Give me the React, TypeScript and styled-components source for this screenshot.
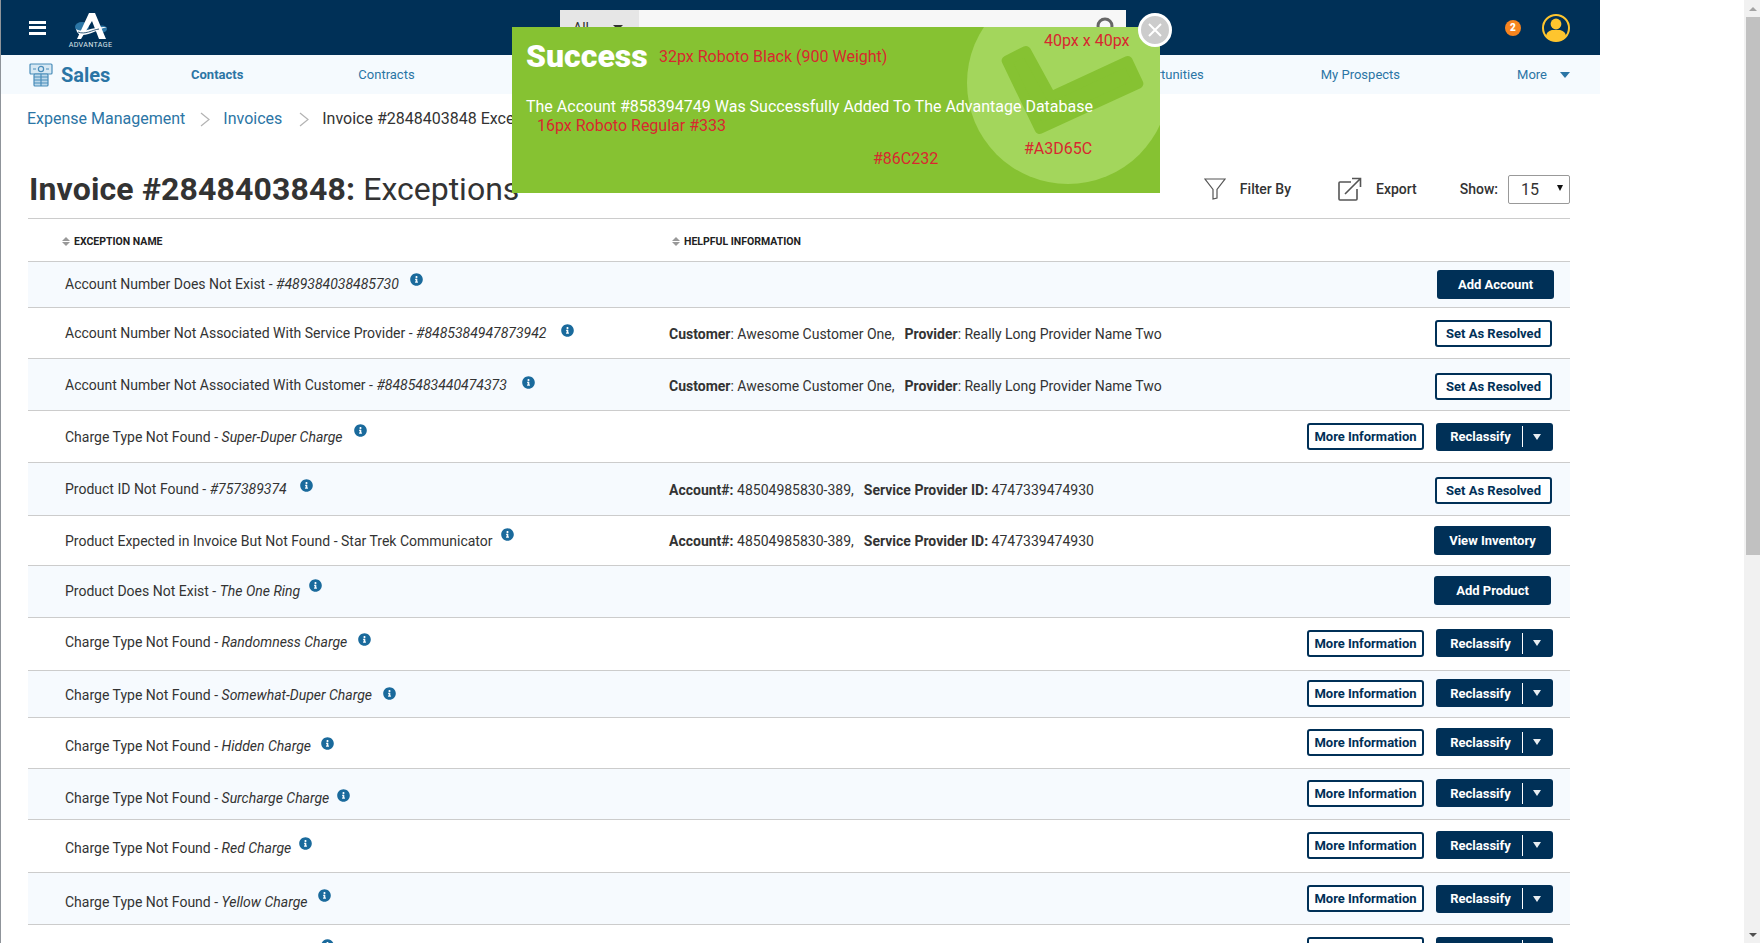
import styled, { createGlobalStyle } from "styled-components";
import { FaInfoCircle } from "react-icons/fa";

const GlobalStyle = createGlobalStyle`
  html, body {
    margin: 0;
    height: 100%;
    overflow: hidden;
    background: #fff;
    font-family: Roboto, "Liberation Sans", sans-serif;
    color: #333;
  }
  * { box-sizing: border-box; }
`;

// moves a centred cell down (or up) by n px inside its row
const shiftPad = (n: number) => (n >= 0 ? `${n * 2}px` : "0");
const shiftPadBottom = (n: number) => (n < 0 ? `${-n * 2}px` : "0");

const Viewport = styled.div`
  position: relative;
  display: flex;
  height: 100vh;
  overflow: hidden;
`;

const Shell = styled.div`
  width: 1600px;
  flex: none;
  border-left: 1px solid #8f949a;
`;

const Gutter = styled.div`
  flex: 1;
`;

const ScrollTrack = styled.div`
  width: 16px;
  flex: none;
  background: #f1f1f1;
  display: flex;
  flex-direction: column;
  align-items: flex-end;
`;

const ScrollArrow = styled.div<{ $down?: boolean }>`
  width: 14px;
  height: 17px;
  display: flex;
  align-items: center;
  justify-content: center;
  margin-top: ${(p) => (p.$down ? "auto" : "0")};
  &::before {
    content: "";
    border-left: 4px solid transparent;
    border-right: 4px solid transparent;
    ${(p) => (p.$down ? "border-top: 4px solid #505050;" : "border-bottom: 4px solid #a3a3a3;")}
  }
`;

const ScrollThumb = styled.div`
  width: 14px;
  height: 538px;
  background: #c1c1c1;
`;

const TopBar = styled.header`
  height: 55px;
  background: #003057;
  display: flex;
  align-items: center;
  padding: 0 30px 0 28px;
`;

const Hamburger = styled.div`
  width: 17px;
  height: 14px;
  display: flex;
  flex-direction: column;
  justify-content: space-between;
  span {
    height: 3px;
    background: #fff;
  }
`;

const Logo = styled.div`
  width: 43px;
  margin-left: 23px;
  display: flex;
  flex-direction: column;
  align-items: center;
  padding-top: 4px;
`;

const LogoText = styled.span`
  font-size: 7.2px;
  line-height: 7px;
  letter-spacing: 0.3px;
  color: #dfe6ec;
  white-space: nowrap;
`;

const Search = styled.div`
  width: 566px;
  height: 35px;
  margin-left: 448px;
  background: #f7f7f7;
  display: flex;
  align-items: center;
  justify-content: space-between;
  padding-right: 8px;
`;

const SearchScope = styled.div`
  width: 79px;
  height: 100%;
  background: #e6e6e6;
  display: flex;
  align-items: center;
  justify-content: space-between;
  padding: 0 16px 0 13px;
  font-size: 14px;
  color: #333;
  &::after {
    content: "";
    border-left: 5px solid transparent;
    border-right: 5px solid transparent;
    border-top: 5px solid #333;
  }
`;

const Alerts = styled.div`
  margin-left: auto;
  display: flex;
  align-items: center;
  gap: 21px;
`;

const Badge = styled.span`
  width: 16px;
  height: 16px;
  border-radius: 50%;
  background: #f7841e;
  color: #fff;
  font-size: 10px;
  font-weight: 900;
  display: flex;
  align-items: center;
  justify-content: center;
`;

const SubNav = styled.nav`
  height: 39px;
  background: #f5fafe;
  display: flex;
  align-items: center;
  padding: 0 30px 0 28px;
`;

const Module = styled.div`
  width: 162px;
  flex: none;
  display: flex;
  align-items: center;
  gap: 8px;
  color: #2b75a5;
  font-size: 20px;
  font-weight: 700;
`;

const NavList = styled.div`
  flex: 1;
  display: flex;
  align-items: center;
  justify-content: space-between;
`;

const NavGroup = styled.div<{ $gap: number }>`
  display: flex;
  align-items: center;
  gap: ${(p) => p.$gap}px;
`;

const NavItem = styled.a<{ $active?: boolean }>`
  font-size: 13px;
  color: #2b75a5;
  font-weight: ${(p) => (p.$active ? 700 : 400)};
  display: flex;
  align-items: center;
  gap: 13px;
`;

const NavCaret = styled.span`
  border-left: 5.5px solid transparent;
  border-right: 5.5px solid transparent;
  border-top: 6px solid #2b75a5;
`;

const Main = styled.main`
  padding: 0 30px 0 27px;
`;

const Breadcrumbs = styled.div`
  padding-top: 15px;
  margin-left: -1px;
  display: flex;
  align-items: center;
  height: 35px;
  font-size: 16px;
  line-height: 20px;
  white-space: nowrap;
`;

const Crumb = styled.a`
  color: #2b75a5;
`;

const CrumbCurrent = styled.span`
  color: #333;
`;

const CrumbChevron = styled.svg<{ $lead: number; $trail: number }>`
  width: 10px;
  height: 15px;
  margin: 0 ${(p) => p.$trail}px 0 ${(p) => p.$lead}px;
  fill: none;
  stroke: #b3b3b3;
  stroke-width: 1.2;
`;

const TitleRow = styled.div`
  margin-top: 41px;
  height: 49px;
  padding: 0 0 10px 1px;
  display: flex;
  align-items: center;
  justify-content: space-between;
  border-bottom: 1px solid #ccc;
`;

const Title = styled.h1`
  margin: 0;
  font-size: 32px;
  line-height: 38px;
  font-weight: 400;
  white-space: nowrap;
  b {
    font-weight: 700;
    letter-spacing: 0.15px;
  }
`;

const Tools = styled.div`
  display: flex;
  align-items: center;
  font-size: 14px;
  font-weight: 500;
  color: #333;
`;

const Tool = styled.div<{ $after: number }>`
  display: flex;
  align-items: center;
  gap: 14px;
  margin-right: ${(p) => p.$after}px;
`;

const ShowLabel = styled.span`
  margin-right: 10px;
`;

const ShowSelect = styled.div`
  width: 62px;
  height: 29px;
  border: 1px solid #999;
  border-radius: 2px;
  background: #fff;
  display: flex;
  align-items: center;
  justify-content: space-between;
  padding: 0 6px 0 12px;
  font-size: 16px;
  font-weight: 400;
  &::after {
    content: "";
    border-left: 3px solid transparent;
    border-right: 3px solid transparent;
    border-top: 6px solid #111;
    margin-bottom: 3px;
  }
`;

const HeadRow = styled.div`
  height: 43px;
  padding-top: 3px;
  display: grid;
  grid-template-columns: 644px 1fr;
  align-items: center;
  border-bottom: 1px solid #ccc;
  font-size: 10.5px;
  font-weight: 700;
  text-transform: uppercase;
  color: #222;
`;

const HeadCell = styled.div<{ $first?: boolean }>`
  display: flex;
  align-items: center;
  gap: 4px;
  padding-left: ${(p) => (p.$first ? "34px" : "0")};
`;

const SortMark = styled.span`
  display: flex;
  flex-direction: column;
  gap: 1px;
  &::before,
  &::after {
    content: "";
    border-left: 4px solid transparent;
    border-right: 4px solid transparent;
  }
  &::before {
    border-bottom: 4px solid #999;
  }
  &::after {
    border-top: 4px solid #999;
  }
`;

const Row = styled.div<{ $height: number; $tint: boolean }>`
  height: ${(p) => p.$height}px;
  display: grid;
  grid-template-columns: 641px 1fr auto;
  align-items: center;
  background: ${(p) => (p.$tint ? "#f6fafe" : "#fff")};
  border-bottom: 1px solid #ccc;
  font-size: 14px;
`;

const NameCell = styled.div<{ $nudge: number }>`
  display: flex;
  align-items: center;
  padding: ${(p) => shiftPad(p.$nudge)} 0 ${(p) => shiftPadBottom(p.$nudge)} 37px;
  white-space: nowrap;
  em {
    font-style: italic;
    white-space: pre;
  }
`;

const InfoMark = styled(FaInfoCircle)<{ $gap: number; $lift: number }>`
  width: 13px;
  height: 13px;
  flex: none;
  color: #1a6a9c;
  margin-left: ${(p) => p.$gap}px;
  margin-bottom: ${(p) => p.$lift * 2}px;
`;

const HelpCell = styled.div<{ $nudge: number }>`
  white-space: nowrap;
  padding-top: ${(p) => p.$nudge * 2}px;
  b {
    font-weight: 700;
  }
  span {
    margin-right: 10px;
  }
`;

const ActionCell = styled.div<{ $inset: number; $shift: number }>`
  display: flex;
  align-items: center;
  gap: 12px;
  padding-right: ${(p) => p.$inset}px;
  padding-top: ${(p) => shiftPad(p.$shift)};
  padding-bottom: ${(p) => shiftPadBottom(p.$shift)};
`;

const SolidButton = styled.button`
  width: 117px;
  height: 29px;
  border: none;
  border-radius: 3px;
  background: #003057;
  color: #fff;
  font: 700 13px Roboto, sans-serif;
  padding: 0;
`;

const LineButton = styled.button`
  width: 117px;
  height: 27px;
  border: 2px solid #003057;
  border-radius: 3px;
  background: #fff;
  color: #003057;
  font: 700 13px Roboto, sans-serif;
  padding: 0;
`;

const SplitButton = styled.button`
  width: 117px;
  height: 28px;
  border: none;
  border-radius: 3px;
  background: #003057;
  color: #fff;
  font: 700 13px Roboto, sans-serif;
  padding: 0;
  display: flex;
  align-items: center;
`;

const SplitLabel = styled.span`
  width: 87px;
  height: 21px;
  line-height: 22px;
  padding-left: 3px;
  text-align: center;
  border-right: 1px solid #fff;
`;

const SplitCaret = styled.span`
  margin-left: 10px;
  border-left: 4.5px solid transparent;
  border-right: 4.5px solid transparent;
  border-top: 6px solid #e8edf1;
`;

const ToastBody = styled.section`
  position: absolute;
  left: 512px;
  top: 27px;
  width: 648px;
  height: 166px;
  overflow: hidden;
  background: #86c232;
  color: #fff;
`;

const ToastArt = styled.svg`
  position: absolute;
  left: 455px;
  top: -45px;
  width: 202px;
  height: 202px;
`;

const ToastTitle = styled.h2`
  position: relative;
  margin: 0;
  padding: 10px 0 0 14px;
  font-size: 32px;
  line-height: 38px;
  font-weight: 900;
`;

const ToastText = styled.p`
  position: relative;
  margin: 0;
  padding: 22px 0 0 14px;
  font-size: 16px;
  line-height: 20px;
`;

const Note = styled.span<{ $x: number; $y: number }>`
  position: absolute;
  left: ${(p) => p.$x}px;
  top: ${(p) => p.$y}px;
  font-size: 16px;
  line-height: 20px;
  color: #d8282f;
  white-space: nowrap;
`;

const CloseButton = styled.button`
  position: absolute;
  left: 1138px;
  top: 13px;
  width: 34px;
  height: 34px;
  padding: 0;
  border: 3px solid #fff;
  border-radius: 50%;
  background: #ccc;
  display: flex;
  align-items: center;
  justify-content: center;
`;

const LogoMark = () => (
  <svg width="40" height="29" viewBox="0 0 40 29">
    <ellipse cx="11" cy="15" rx="7" ry="5" fill="#2b75a5" />
    <ellipse cx="31" cy="17" rx="5" ry="3.5" fill="#2b75a5" />
    <path d="M18 1 L24 1 L35 27 L28 27 L21 9 L10 27 L6 27 Z" fill="#fff" />
    <path d="M5 17 C12 22 22 14 36 15 C27 17 20 23 11 23 C8 23 6 21 5 17 Z" fill="#fff" />
    <path d="M7 20 C14 23 21 18 28 17" fill="none" stroke="#003057" strokeWidth="0.8" />
  </svg>
);

const SalesIcon = () => (
  <svg width="24" height="24" viewBox="0 0 24 24" fill="none" stroke="#4a8dba" strokeWidth="1.2">
    <rect x="1" y="1" width="22" height="10" rx="1" fill="#d7e8f3" />
    <circle cx="12" cy="6" r="2.6" />
    <path d="M4 6h3M17 6h3" />
    <rect x="5" y="11" width="14" height="12" rx="1" fill="#bcd8ea" />
    <path d="M5 14h14M5 17h14M5 20h14M12 11v12" />
  </svg>
);

const UserIcon = () => (
  <svg width="28" height="28" viewBox="0 0 28 28">
    <circle cx="14" cy="14" r="13" fill="#003057" stroke="#fec52e" strokeWidth="2" />
    <circle cx="14" cy="10" r="5.4" fill="#fec52e" />
    <path d="M4 23 C4 18 8 16 11 16 H17 C20 16 24 18 24 23 C21 26 17 27 14 27 C11 27 7 26 4 23 Z" fill="#fec52e" />
  </svg>
);

const SearchGlyph = () => (
  <svg width="22" height="22" viewBox="0 0 22 22" fill="none" stroke="#666" strokeWidth="3">
    <circle cx="9" cy="9" r="7" />
    <path d="M14 14l6 6" />
  </svg>
);

const FilterIcon = () => (
  <svg width="22" height="22" viewBox="0 0 22 22" fill="none" stroke="#555" strokeWidth="1.2">
    <path d="M1 1 H21 L13 11.5 V20 L9 21 V11.5 Z" />
  </svg>
);

const ExportIcon = () => (
  <svg width="24" height="24" viewBox="0 0 24 24" fill="none" stroke="#555" strokeWidth="1.6">
    <path d="M13 5 H2 Q1 5 1 6 V22 Q1 23 2 23 H18 Q19 23 19 22 V12" />
    <path d="M7 17 L22 2 M14 1.5 H22.5 V10" />
  </svg>
);

const Chevron = ({ lead, trail }: { lead: number; trail: number }) => (
  <CrumbChevron viewBox="0 0 10 15" $lead={lead} $trail={trail}>
    <path d="M1 1 L9 7.5 L1 14" />
  </CrumbChevron>
);

type RowData = {
  height: number;
  name: string;
  detail?: string;
  gap: number;
  lift: number;
  nudge?: number;
  help?: [string, string, string, string];
  helpNudge?: number;
  actions: "account" | "resolve" | "reclassify" | "inventory" | "product";
  inset: number;
  shift?: number;
};

const customerHelp: [string, string, string, string] = ["Customer", ": Awesome Customer One,", "Provider", ": Really Long Provider Name Two"];
const accountHelp: [string, string, string, string] = ["Account#:", " 48504985830-389,", "Service Provider ID:", " 4747339474930"];

const rows: RowData[] = [
  { height: 46, name: "Account Number Does Not Exist - ", detail: "#489384038485730", gap: 11, lift: 4, nudge: -1, actions: "account", inset: 16 },
  { height: 51, name: "Account Number Not Associated With Service Provider - ", detail: "#8485384947873942", gap: 14, lift: 3, help: customerHelp, helpNudge: 1, actions: "resolve", inset: 18 },
  { height: 52, name: "Account Number Not Associated With Customer - ", detail: "#8485483440474373", gap: 15, lift: 2, help: customerHelp, helpNudge: 1, actions: "resolve", inset: 18, shift: 2 },
  { height: 52, name: "Charge Type Not Found - ", detail: "Super-Duper Charge", gap: 11, lift: 6, actions: "reclassify", inset: 17 },
  { height: 53, name: "Product ID Not Found - ", detail: "#757389374", gap: 13, lift: 4, help: accountHelp, helpNudge: 1, actions: "resolve", inset: 18, shift: 1 },
  { height: 50, name: "Product Expected in Invoice But Not Found - Star Trek Communicator", gap: 5, lift: 6, help: accountHelp, actions: "inventory", inset: 19 },
  { height: 52, name: "Product Does Not Exist - ", detail: "The One Ring", gap: 9, lift: 5, nudge: -1, actions: "product", inset: 19, shift: -1 },
  { height: 53, name: "Charge Type Not Found - ", detail: "Randomness Charge", gap: 11, lift: 3, nudge: -2, actions: "reclassify", inset: 17, shift: -1 },
  { height: 47, name: "Charge Type Not Found - ", detail: "Somewhat-Duper Charge", gap: 11, lift: 2, nudge: 1, actions: "reclassify", inset: 17, shift: -1 },
  { height: 51, name: "Charge Type Not Found - ", detail: "Hidden Charge", gap: 10, lift: 3, nudge: 3, actions: "reclassify", inset: 17, shift: -1 },
  { height: 51, name: "Charge Type Not Found - ", detail: "Surcharge Charge", gap: 8, lift: 3, nudge: 4, actions: "reclassify", inset: 17, shift: -1 },
  { height: 53, name: "Charge Type Not Found - ", detail: "Red Charge", gap: 8, lift: 5, nudge: 2, actions: "reclassify", inset: 17, shift: -1 },
  { height: 52, name: "Charge Type Not Found - ", detail: "Yellow Charge", gap: 11, lift: 6, nudge: 3, actions: "reclassify", inset: 17 },
  { height: 50, name: "Charge Type Not Found - ", detail: "Orange Charge", gap: 10, lift: 6, nudge: 2, actions: "reclassify", inset: 17, shift: 1 },
];

function RowActions({ kind }: { kind: RowData["actions"] }) {
  if (kind === "account") return <SolidButton>Add Account</SolidButton>;
  if (kind === "resolve") return <LineButton>Set As Resolved</LineButton>;
  if (kind === "inventory") return <SolidButton>View Inventory</SolidButton>;
  if (kind === "product") return <SolidButton>Add Product</SolidButton>;
  return (
    <>
      <LineButton>More Information</LineButton>
      <SplitButton>
        <SplitLabel>Reclassify</SplitLabel>
        <SplitCaret />
      </SplitButton>
    </>
  );
}

export default function App() {
  return (
    <Viewport>
      <GlobalStyle />
      <Shell>
        <TopBar>
          <Hamburger>
            <span />
            <span />
            <span />
          </Hamburger>
          <Logo>
            <LogoMark />
            <LogoText>ADVANTAGE</LogoText>
          </Logo>
          <Search>
            <SearchScope>All</SearchScope>
            <SearchGlyph />
          </Search>
          <Alerts>
            <Badge>2</Badge>
            <UserIcon />
          </Alerts>
        </TopBar>
        <SubNav>
          <Module>
            <SalesIcon />
            Sales
          </Module>
          <NavList>
            <NavGroup $gap={115}>
              <NavItem $active>Contacts</NavItem>
              <NavItem>Contracts</NavItem>
            </NavGroup>
            <NavGroup $gap={117}>
              <NavItem>Opportunities</NavItem>
              <NavItem>My Prospects</NavItem>
              <NavItem>
                More
                <NavCaret />
              </NavItem>
            </NavGroup>
          </NavList>
        </SubNav>
        <Main>
          <Breadcrumbs>
            <Crumb>Expense Management</Crumb>
            <Chevron lead={15} trail={13} />
            <Crumb>Invoices</Crumb>
            <Chevron lead={17} trail={13} />
            <CrumbCurrent>Invoice #2848403848 Exceptions</CrumbCurrent>
          </Breadcrumbs>
          <TitleRow>
            <Title>
              <b>Invoice #2848403848:</b> Exceptions
            </Title>
            <Tools>
              <Tool $after={47}>
                <FilterIcon />
                Filter By
              </Tool>
              <Tool $after={43}>
                <ExportIcon />
                Export
              </Tool>
              <ShowLabel>Show:</ShowLabel>
              <ShowSelect>15</ShowSelect>
            </Tools>
          </TitleRow>
          <HeadRow>
            <HeadCell $first>
              <SortMark />
              Exception Name
            </HeadCell>
            <HeadCell>
              <SortMark />
              Helpful Information
            </HeadCell>
          </HeadRow>
          {rows.map((row, i) => (
            <Row key={i} $height={row.height} $tint={i % 2 === 0}>
              <NameCell $nudge={row.nudge ?? 0}>
                {row.name.trim()}&nbsp;
                {row.detail && <em>{row.detail}</em>}
                <InfoMark $gap={row.gap} $lift={row.lift} />
              </NameCell>
              <HelpCell $nudge={row.helpNudge ?? 0}>
                {row.help && (
                  <>
                    <span>
                      <b>{row.help[0]}</b>
                      {row.help[1]}
                    </span>
                    <b>{row.help[2]}</b>
                    {row.help[3]}
                  </>
                )}
              </HelpCell>
              <ActionCell $inset={row.inset} $shift={row.shift ?? 0}>
                <RowActions kind={row.actions} />
              </ActionCell>
            </Row>
          ))}
        </Main>
      </Shell>
      <Gutter />
      <ScrollTrack>
        <ScrollArrow />
        <ScrollThumb />
        <ScrollArrow $down />
      </ScrollTrack>
      <ToastBody>
        <ToastArt viewBox="967 -18 202 202">
          <circle cx="1068" cy="83" r="101" fill="#a3d65c" />
          <polygon
            points="1006.65,60.65 1025.95,50.95 1050.95,96.65 1127.65,60.95 1138.35,83.65 1039.65,129.05"
            fill="#86c232"
            stroke="#86c232"
            strokeWidth="10"
            strokeLinejoin="round"
          />
        </ToastArt>
        <ToastTitle>Success</ToastTitle>
        <ToastText>The Account #858394749 Was Successfully Added To The Advantage Database</ToastText>
        <Note $x={147} $y={20}>32px Roboto Black (900 Weight)</Note>
        <Note $x={25} $y={89}>16px Roboto Regular #333</Note>
        <Note $x={361} $y={122}>#86C232</Note>
        <Note $x={512} $y={112}>#A3D65C</Note>
        <Note $x={532} $y={4}>40px x 40px</Note>
      </ToastBody>
      <CloseButton>
        <svg width="16" height="16" viewBox="0 0 16 16" stroke="#fff" strokeWidth="2">
          <path d="M2 2 L14 14 M14 2 L2 14" />
        </svg>
      </CloseButton>
    </Viewport>
  );
}
